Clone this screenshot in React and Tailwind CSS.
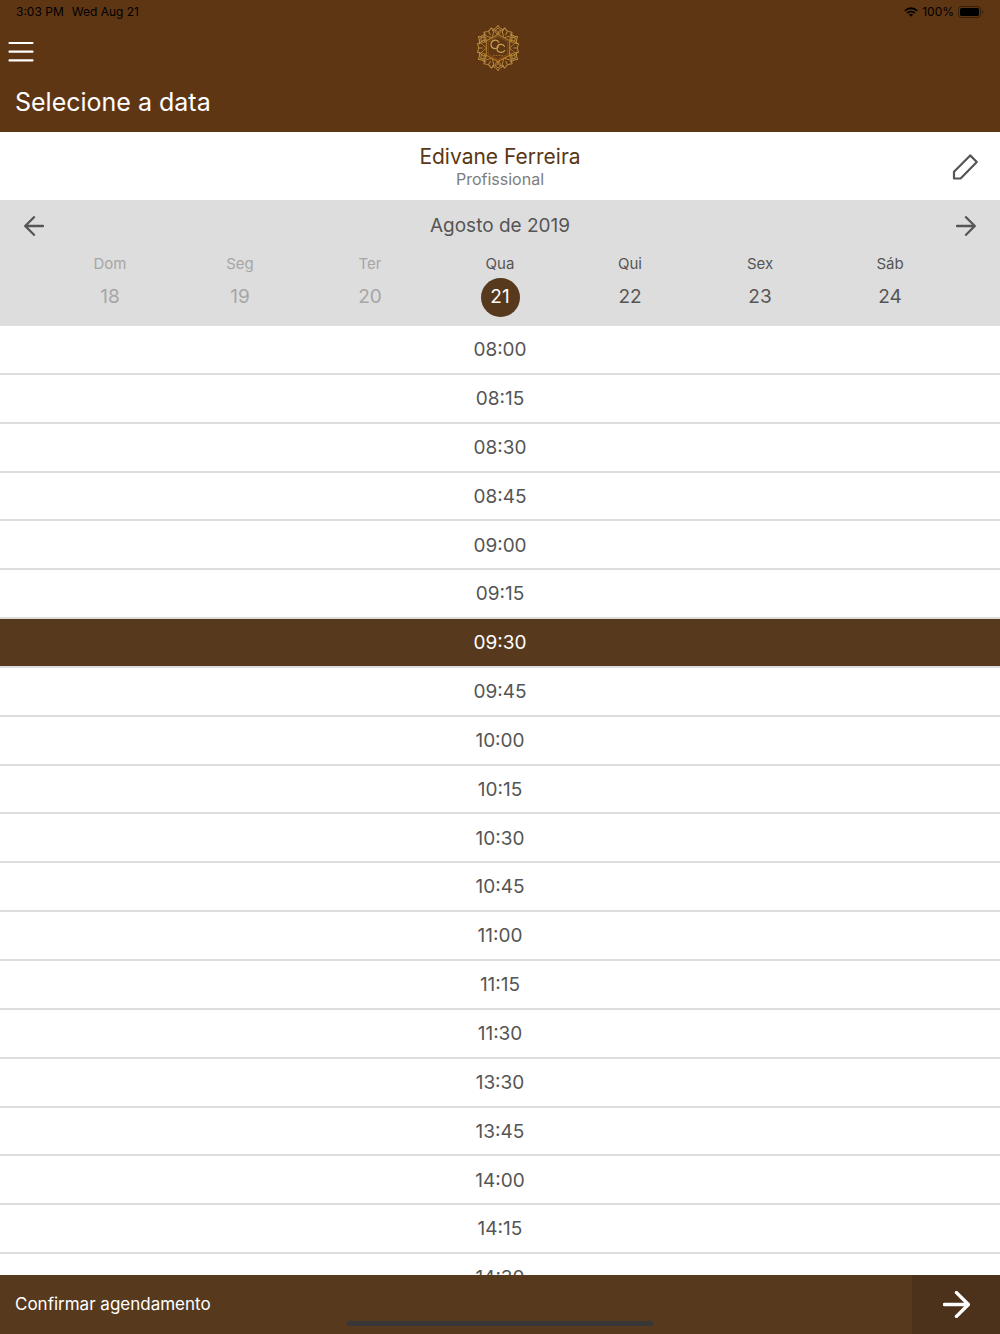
import React, { useState } from 'react'

const days = [
  { name: 'Dom', date: 18, past: true },
  { name: 'Seg', date: 19, past: true },
  { name: 'Ter', date: 20, past: true },
  { name: 'Qua', date: 21 },
  { name: 'Qui', date: 22 },
  { name: 'Sex', date: 23 },
  { name: 'Sáb', date: 24 },
]

const times = [
  '08:00', '08:15', '08:30', '08:45', '09:00', '09:15', '09:30', '09:45', '10:00', '10:15',
  '10:30', '10:45', '11:00', '11:15', '11:30', '13:30', '13:45', '14:00', '14:15', '14:30',
]

function StatusBar() {
  return (
    <div className="flex h-6 items-center justify-between px-4 text-[12px] text-black">
      <div className="flex gap-2">
        <span>3:03 PM</span>
        <span>Wed Aug 21</span>
      </div>
      <div className="flex items-center gap-1">
        <svg width="14" height="10" viewBox="0 0 14 10" fill="none" stroke="currentColor" strokeWidth="1.8">
          <path d="M0.9 3.8C4.3 0.4 9.7 0.4 13.1 3.8" />
          <path d="M3.1 6.1C5.3 4 8.7 4 10.9 6.1" />
          <path d="M7 9.8L4.9 7.6C6 6.6 8 6.6 9.1 7.6Z" fill="currentColor" stroke="none" />
        </svg>
        <span>100%</span>
        <svg width="26" height="12" viewBox="0 0 26 12">
          <rect x="0.5" y="0.5" width="22" height="11" rx="3" fill="none" stroke="#000" strokeOpacity="0.4" />
          <rect x="2" y="2" width="19" height="8" rx="1.6" />
          <path d="M24 4.2c1.6 0.6 1.6 3 0 3.6z" opacity="0.5" />
        </svg>
      </div>
    </div>
  )
}

function Logo() {
  const turns = [0, 60, 120, 180, 240, 300]
  return (
    <svg width="50" height="46" viewBox="-23 -23 50 46" role="img" aria-label="Logo">
      <defs>
        <linearGradient id="gold" gradientUnits="userSpaceOnUse" x1="-14" y1="-20" x2="10" y2="20">
          <stop offset="0" stopColor="#c9a04e" />
          <stop offset="0.35" stopColor="#a8762c" />
          <stop offset="0.6" stopColor="#b87420" />
          <stop offset="1" stopColor="#d98c22" />
        </linearGradient>
        <g id="petal">
          <path d="M-6 -18C-3.5 -19 -1.5 -20 0 -22.6C1.5 -20 3.5 -19 6 -18" />
          <path d="M0 -20C-3.5 -17.5 -4 -15 0 -14.4C4 -15 3.5 -17.5 0 -20Z" />
          <path d="M-6 -18C-3 -18.5 0 -16.5 1.5 -13.6" />
          <path d="M6 -18C3 -18.5 0 -16.5 -1.5 -13.6" />
        </g>
        <g id="leaf">
          <path d="M-5 -17.2L-4.4 -20.6L0 -19.2L4.4 -20.6L5 -17.2" />
          <path d="M-5 -17.2C-3 -14 -1 -13.5 0 -11.5C1 -13.5 3 -14 5 -17.2" />
          <path d="M0 -19.2V-15" />
        </g>
      </defs>
      <g fill="none" stroke="url(#gold)" strokeWidth="1" strokeLinejoin="round">
        {turns.map((t) => (
          <g key={t} transform={'rotate(' + t + ')'}>
            <use href="#petal" />
            <use href="#leaf" transform="rotate(30)" />
          </g>
        ))}
        <path d="M0 -13.6L11.6 -7.2V7.2L0 13.6L-11.6 7.2V-7.2Z" fill="#5f3613" strokeWidth="1.1" />
        <path d="M0 -11.6L9.8 -6.2V6.2L0 11.6L-9.8 6.2V-6.2Z" strokeWidth="0.4" />
      </g>
      <g fill="none" stroke="#cda052" strokeWidth="1.2" strokeLinecap="round">
        <path d="M0.8 -5.6C-0.4 -9 -7 -8.4 -7 -3.6C-7 1 -1.6 1.6 0.4 -1" />
        <path d="M6.4 -1.6C5.4 -4.8 -1 -4.4 -1 0.6C-1 5.2 4.8 5.4 6.6 2.6" />
      </g>
      <path d="M-5 7.4H5" stroke="#a8782f" strokeWidth="0.8" strokeDasharray="1 0.5" />
    </svg>
  )
}

function Arrow({ left, size, weight }) {
  return (
    <svg
      width={size}
      height={size}
      viewBox="0 0 20 20"
      fill="none"
      stroke="currentColor"
      strokeWidth={weight}
      strokeLinecap="round"
      strokeLinejoin="round"
    >
      {left ? <path d="M19 10H1.5M10 1.2L1.2 10L10 18.8" /> : <path d="M1 10H18.5M10 1.2L18.8 10L10 18.8" />}
    </svg>
  )
}

function Header() {
  return (
    <header className="bg-[#5f3613] text-white">
      <StatusBar />
      <div className="grid h-12 grid-cols-3 items-center px-2">
        <button aria-label="Menu" className="w-fit pt-2">
          <svg width="26" height="22" viewBox="0 0 26 22" stroke="currentColor" strokeWidth="2.2" strokeLinecap="round">
            <path d="M1.5 2H24.5M1.5 10.7H24.5M1.5 19.4H24.5" />
          </svg>
        </button>
        <div className="flex justify-center">
          <Logo />
        </div>
      </div>
      <h1 className="px-[15px] pt-[14px] pb-[14px] text-[25px] leading-8">Selecione a data</h1>
    </header>
  )
}

function Professional() {
  return (
    <section className="grid h-[68px] grid-cols-[60px_1fr_60px] items-center px-2 pt-[2px]">
      <div className="col-start-2 text-center">
        <h2 className="text-[21px] leading-6 text-[#5a3714]">Edivane Ferreira</h2>
        <p className="text-[16px] leading-5 text-[#7d7d7d]">Profissional</p>
      </div>
      <button aria-label="Editar profissional" className="flex justify-end pr-3 text-[#555]">
        <svg width="28" height="28" viewBox="0 0 28 28" fill="none" stroke="currentColor" strokeWidth="2.2" strokeLinejoin="round">
          <path d="M2 25.5V18.8L18.2 2.4L24.8 9L8.6 25.5Z" />
        </svg>
      </button>
    </section>
  )
}

function Week({ selected, onSelect }) {
  return (
    <section className="bg-[#ddd] text-[#555]">
      <div className="flex h-[50px] items-center justify-between px-6 pt-[2px]">
        <button aria-label="Semana anterior">
          <Arrow left size={20} weight={2.3} />
        </button>
        <h3 className="text-[19px]">Agosto de 2019</h3>
        <button aria-label="Próxima semana">
          <Arrow size={20} weight={2.3} />
        </button>
      </div>
      <div className="grid grid-cols-7 px-[45px] pb-[9px]">
        {days.map((day) => (
          <button
            key={day.date}
            disabled={day.past}
            onClick={() => onSelect(day.date)}
            className="flex flex-col items-center disabled:text-[#a6a6a6]"
          >
            <span className="text-[15px] leading-7">{day.name}</span>
            <span
              className={
                'flex size-[39px] items-center justify-center rounded-full text-[19px] ' +
                (selected === day.date ? 'bg-[#573a1d] text-white' : '')
              }
            >
              {day.date}
            </span>
          </button>
        ))}
      </div>
    </section>
  )
}

function TimeList({ selected, onSelect }) {
  return (
    <main className="min-h-0 flex-1 overflow-y-auto [scrollbar-width:none]">
      <ul className="flex min-h-[977px] flex-col">
        {times.map((time) => (
          <li key={time} className="flex flex-1 border-b-2 border-[#ddd]">
            <button
              onClick={() => onSelect(time)}
              className={
                'w-full pt-[2px] text-center text-[19px] ' +
                (selected === time ? 'bg-[#573a1d] text-white' : 'text-[#555]')
              }
            >
              {time}
            </button>
          </li>
        ))}
      </ul>
    </main>
  )
}

export default function App() {
  const [date, setDate] = useState(21)
  const [time, setTime] = useState('09:30')

  return (
    <div className="flex h-screen flex-col overflow-hidden bg-white font-['Inter',sans-serif]">
      <Header />
      <Professional />
      <Week selected={date} onSelect={setDate} />
      <TimeList selected={time} onSelect={setTime} />
      <footer className="relative bg-[#573a1d] text-white">
        <button className="flex w-full items-stretch text-left">
          <span className="flex-1 px-[15px] py-4 text-[17px] leading-[27px]">Confirmar agendamento</span>
          <span className="flex w-[88px] items-center justify-center bg-[#4c321a]">
            <Arrow size={27} weight={2.6} />
          </span>
        </button>
        <div className="absolute bottom-2 left-1/2 h-[5px] w-[307px] -translate-x-1/2 rounded-full bg-[#373737]" />
      </footer>
    </div>
  )
}
